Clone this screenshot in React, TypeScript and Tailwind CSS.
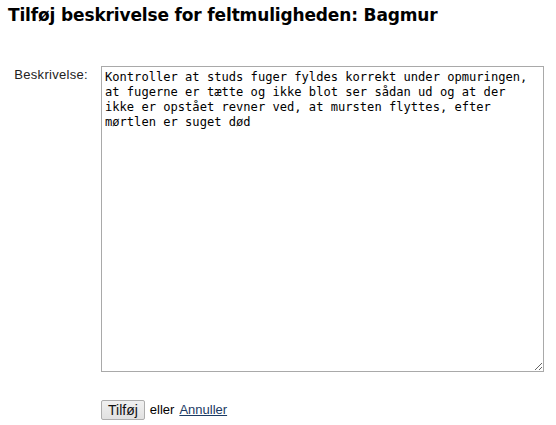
const TEXT =
  'Kontroller at studs fuger fyldes korrekt under opmuringen, at fugerne er tætte og ikke blot ser sådan ud og at der ikke er opstået revner ved, at mursten flyttes, efter mørtlen er suget død'

export default function App() {
  return (
    <div className="min-h-[425px] bg-white pl-[8px] pt-[4px] text-black">
      <h1 className="font-['DejaVu_Sans',sans-serif] text-[17px] font-bold leading-[22px] tracking-[-0.15px]">
        Tilføj beskrivelse for feltmuligheden: Bagmur
      </h1>

      <form className="mt-[40px] font-['Liberation_Sans',Arial,sans-serif] text-[13px]">
        {/* label + textarea row */}
        <div className="flex items-start">
          <label
            htmlFor="beskrivelse"
            className="w-[80px] pt-[1px] text-right leading-[16px] tracking-[0.3px] text-[#222]"
          >
            Beskrivelse:
          </label>
          <textarea
            id="beskrivelse"
            defaultValue={TEXT}
            className="ml-[13px] h-[306px] w-[443px] resize-y border border-[#a9a9a9] pl-[3px] pr-[8px] pt-[3px] font-['DejaVu_Sans_Mono',monospace] text-[12.1px] leading-[15px] text-black outline-none"
          />
        </div>

        {/* actions */}
        <div className="ml-[93px] mt-[28px] flex items-center gap-[5px]">
          <button
            type="button"
            className="h-[20px] rounded-[2px] border border-[#adadad] bg-gradient-to-b from-[#f0f0f0] to-[#e1e1e1] px-[6px] text-[14px] leading-[17px] text-[#111]"
          >
            Tilføj
          </button>
          <span>eller</span>
          <a href="#" className="text-[#1b3a63] underline">
            Annuller
          </a>
        </div>
      </form>
    </div>
  )
}
